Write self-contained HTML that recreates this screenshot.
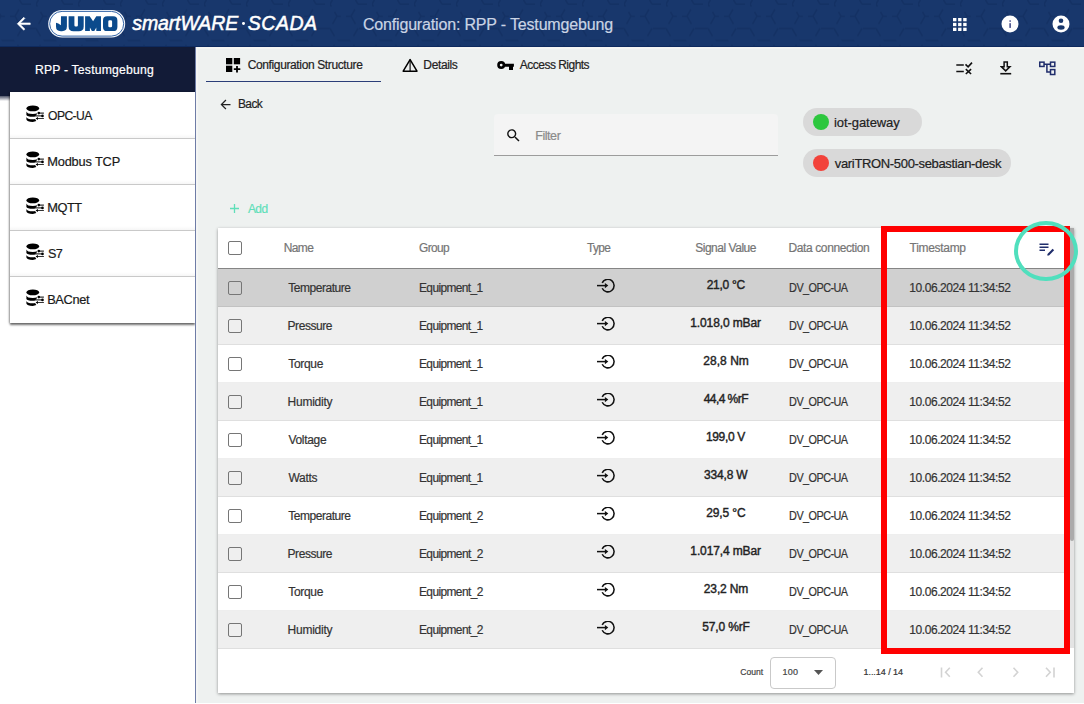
<!DOCTYPE html>
<html><head><meta charset="utf-8">
<style>
*{box-sizing:border-box;margin:0;padding:0}
html,body{width:1084px;height:704px;overflow:hidden;background:#eef1f0;font-family:"Liberation Sans",sans-serif;position:relative}
.a{position:absolute;white-space:nowrap}
.t{position:absolute;white-space:nowrap;line-height:1;-webkit-text-stroke:0.2px currentColor}
#hdr{left:0;top:0;width:1084px;height:47px;background:#18376c;border-bottom:1px solid #0e2a5e;overflow:hidden;z-index:5}
#side{left:0;top:47px;width:196px;height:657px;background:#fff}
#sidehead{left:0;top:47px;width:195px;height:49px;background:#121b37}
.stxt{font-size:13px;color:#222;letter-spacing:-0.35px}
.th{font-size:12px;color:#757575;letter-spacing:-0.3px}
.td{font-size:12px;color:#333;letter-spacing:-0.45px}
.sv{font-size:12px;color:#222;font-weight:bold;letter-spacing:-0.5px}
.row{left:218px;width:852px;height:38px;border-bottom:1px solid rgba(0,0,0,0.065)}
.cb{position:absolute;left:228px;width:14px;height:14px;border:1.7px solid #767676;border-radius:2px}

</style></head><body>
<div id="hdr" class="a">
<svg class="a" style="left:0;top:0" width="1084" height="47" viewBox="0 0 1084 47">
<defs><pattern id="hx" width="42" height="48.5" patternUnits="userSpaceOnUse" x="-6" y="-8">
<path d="M0 12.1 L7 0 H21 L28 12.1 L21 24.2 H7 Z M28 12.1 H42 M21 24.2 L28 36.4 H42 M7 24.2 L0 36.4 M28 36.4 L21 48.5 H7 L0 36.4" fill="none" stroke="#0f2a5a" stroke-width="1.6" stroke-dasharray="9 6 13 5"/>
</pattern></defs>
<rect width="1084" height="47" fill="url(#hx)" opacity="0.45"/></svg>
<svg class="a" style="left:13.5px;top:14px" width="19.5" height="19.5" viewBox="0 0 24 24"><path fill="#fff" stroke="#fff" stroke-width="0.7" d="M20 11H7.83l5.59-5.59L12 4l-8 8 8 8 1.41-1.41L7.83 13H20v-2z"/></svg>
<svg class="a" style="left:0;top:0" width="130" height="47" viewBox="0 0 130 47">
<rect x="48.2" y="9.9" width="77" height="27.7" rx="13.85" fill="#f4f7fb"/>
<rect x="49.7" y="11.4" width="74" height="24.7" rx="12.35" fill="#fff" stroke="#3566a8" stroke-width="1"/>
<g fill="#0b4a8c">
<path d="M61 16.2 H66.9 V26.6 Q66.9 31.2 62 31.2 H60.8 Q56 31.2 56 26.6 V22.8 L58.3 23.4 L60.9 25.3 Z"/>
<path d="M68.6 16.2 H74.4 V25.2 Q74.4 26.4 75.6 26.4 H76.7 Q77.9 26.4 77.9 25.2 V16.2 H83.7 V26.4 Q83.7 31.2 78.8 31.2 H73.5 Q68.6 31.2 68.6 26.4 Z"/>
<path d="M85.1 16.2 H89.7 L93.1 21.3 L96.3 16.2 H101 V31.1 H96.3 V27.4 L94.3 31.1 H91.9 L89.9 27.4 V31.1 H85.1 Z"/>
<path fill-rule="evenodd" d="M107.2 16.2 H113.2 Q117.4 16.2 117.4 20.4 V26.9 Q117.4 31.1 113.2 31.1 H107.2 Q103 31.1 103 26.9 V20.4 Q103 16.2 107.2 16.2 Z M109.6 20.3 Q108.3 20.3 108.3 21.6 V26 Q108.3 27.3 109.6 27.3 H110.8 Q112.1 27.3 112.1 26 V21.6 Q112.1 20.3 110.8 20.3 Z"/>
</g></svg>
<div class="t" style="left:132.30px;top:14.39px;font-size:19.5px;color:#fff;letter-spacing:-0.132px;font-style:italic;-webkit-text-stroke:0.5px #fff;">smartWARE</div>
<div class="t" style="left:247.81px;top:14.39px;font-size:19.5px;color:#fff;letter-spacing:0.496px;font-style:italic;-webkit-text-stroke:0.5px #fff;">SCADA</div>
<div class="a" style="left:242.2px;top:21.9px;width:2.8px;height:2.8px;border-radius:50%;background:#fff"></div>
<div class="t" style="left:362.90px;top:16.96px;font-size:16px;color:#cad4e4;letter-spacing:-0.168px;">Configuration: RPP - Testumgebung</div>
<svg class="a" style="left:953px;top:17.6px" width="14" height="13" viewBox="0 0 14 13" fill="#fff"><rect x="0" y="0" width="3.4" height="3.3"/><rect x="0" y="4.85" width="3.4" height="3.3"/><rect x="0" y="9.7" width="3.4" height="3.3"/><rect x="5.1" y="0" width="3.4" height="3.3"/><rect x="5.1" y="4.85" width="3.4" height="3.3"/><rect x="5.1" y="9.7" width="3.4" height="3.3"/><rect x="10.2" y="0" width="3.4" height="3.3"/><rect x="10.2" y="4.85" width="3.4" height="3.3"/><rect x="10.2" y="9.7" width="3.4" height="3.3"/></svg>
<svg class="a" style="left:1001px;top:15px" width="18" height="18" viewBox="0 0 18 18"><circle cx="9" cy="9" r="8.5" fill="#fff"/><rect x="8.45" y="8.2" width="1.3" height="4.7" fill="#1d2670"/><circle cx="9.1" cy="6.1" r="0.8" fill="#1d2670"/></svg>
<svg class="a" style="left:1052px;top:15px" width="18" height="18" viewBox="0 0 18 18"><circle cx="9" cy="9" r="8.5" fill="#fff"/><circle cx="9" cy="5.8" r="2.3" fill="#18376c"/><ellipse cx="9" cy="12.5" rx="3.6" ry="2.2" fill="#18376c"/></svg>
</div>
<div class="a" style="left:196px;top:47px;width:888px;height:2px;background:#f5f5f3"></div>
<div id="side" class="a"></div>
<div id="sidehead" class="a"></div>
<div class="a" style="left:0;top:96px;width:195px;height:5px;background:linear-gradient(rgba(18,27,55,0.75),rgba(18,27,55,0))"></div>
<div class="t" style="left:34.92px;top:63.67px;font-size:12.2px;color:#fff;letter-spacing:0.202px;">RPP - Testumgebung</div>
<div class="a" style="left:10px;top:92px;width:185px;height:231px;background:#fff;box-shadow:0 1.5px 2px rgba(0,0,0,0.55),-1px 0 2px rgba(0,0,0,0.25)"></div>
<svg class="a" style="left:26px;top:105.2px" width="19" height="18" viewBox="0 0 19 18">
<ellipse cx="6.8" cy="3.4" rx="6.4" ry="2.9" fill="#000"/>
<path d="M0.4 6.6 Q1 9.1 6.8 9.1 Q9.4 9.1 11.3 8.3 L9.7 11.2 Q8.3 11.7 6.8 11.7 Q1.1 11.7 0.4 9.9 Z" fill="#000"/>
<path d="M0.4 11.9 Q1 14.2 6.8 14.2 Q8.1 14.2 9.1 14 L10.3 16.1 Q8.7 16.9 6.8 16.9 Q1 16.9 0.4 14.6 Z" fill="#000"/>
<path d="M12 8.1 H17.9 M9.4 10.9 H16.5 M10.6 13.5 H17.9" stroke="#333" stroke-width="1.1"/>
<circle cx="12.8" cy="8.1" r="1.3" fill="#000"/><circle cx="16.5" cy="10.9" r="1.3" fill="#000"/><path d="M9.6 13.5 L12 12 V15Z" fill="#000"/>
</svg>
<div class="t" style="left:47.62px;top:109.86px;font-size:12.8px;color:#1a1a1a;letter-spacing:-0.600px;transform:scaleX(0.9469);transform-origin:0.58px 0;">OPC-UA</div>
<div class="a" style="left:10px;top:134px;width:185px;height:4px;background:linear-gradient(to bottom,rgba(0,0,0,0),rgba(0,0,0,0.035))"></div>
<div class="a" style="left:10px;top:138px;width:185px;height:1px;background:#c9c9c9"></div>
<svg class="a" style="left:26px;top:151.2px" width="19" height="18" viewBox="0 0 19 18">
<ellipse cx="6.8" cy="3.4" rx="6.4" ry="2.9" fill="#000"/>
<path d="M0.4 6.6 Q1 9.1 6.8 9.1 Q9.4 9.1 11.3 8.3 L9.7 11.2 Q8.3 11.7 6.8 11.7 Q1.1 11.7 0.4 9.9 Z" fill="#000"/>
<path d="M0.4 11.9 Q1 14.2 6.8 14.2 Q8.1 14.2 9.1 14 L10.3 16.1 Q8.7 16.9 6.8 16.9 Q1 16.9 0.4 14.6 Z" fill="#000"/>
<path d="M12 8.1 H17.9 M9.4 10.9 H16.5 M10.6 13.5 H17.9" stroke="#333" stroke-width="1.1"/>
<circle cx="12.8" cy="8.1" r="1.3" fill="#000"/><circle cx="16.5" cy="10.9" r="1.3" fill="#000"/><path d="M9.6 13.5 L12 12 V15Z" fill="#000"/>
</svg>
<div class="t" style="left:47.18px;top:155.86px;font-size:12.8px;color:#1a1a1a;letter-spacing:-0.152px;">Modbus TCP</div>
<div class="a" style="left:10px;top:180px;width:185px;height:4px;background:linear-gradient(to bottom,rgba(0,0,0,0),rgba(0,0,0,0.035))"></div>
<div class="a" style="left:10px;top:184px;width:185px;height:1px;background:#c9c9c9"></div>
<svg class="a" style="left:26px;top:197.2px" width="19" height="18" viewBox="0 0 19 18">
<ellipse cx="6.8" cy="3.4" rx="6.4" ry="2.9" fill="#000"/>
<path d="M0.4 6.6 Q1 9.1 6.8 9.1 Q9.4 9.1 11.3 8.3 L9.7 11.2 Q8.3 11.7 6.8 11.7 Q1.1 11.7 0.4 9.9 Z" fill="#000"/>
<path d="M0.4 11.9 Q1 14.2 6.8 14.2 Q8.1 14.2 9.1 14 L10.3 16.1 Q8.7 16.9 6.8 16.9 Q1 16.9 0.4 14.6 Z" fill="#000"/>
<path d="M12 8.1 H17.9 M9.4 10.9 H16.5 M10.6 13.5 H17.9" stroke="#333" stroke-width="1.1"/>
<circle cx="12.8" cy="8.1" r="1.3" fill="#000"/><circle cx="16.5" cy="10.9" r="1.3" fill="#000"/><path d="M9.6 13.5 L12 12 V15Z" fill="#000"/>
</svg>
<div class="t" style="left:47.18px;top:201.86px;font-size:12.8px;color:#1a1a1a;letter-spacing:-0.415px;">MQTT</div>
<div class="a" style="left:10px;top:226px;width:185px;height:4px;background:linear-gradient(to bottom,rgba(0,0,0,0),rgba(0,0,0,0.035))"></div>
<div class="a" style="left:10px;top:230px;width:185px;height:1px;background:#c9c9c9"></div>
<svg class="a" style="left:26px;top:243.2px" width="19" height="18" viewBox="0 0 19 18">
<ellipse cx="6.8" cy="3.4" rx="6.4" ry="2.9" fill="#000"/>
<path d="M0.4 6.6 Q1 9.1 6.8 9.1 Q9.4 9.1 11.3 8.3 L9.7 11.2 Q8.3 11.7 6.8 11.7 Q1.1 11.7 0.4 9.9 Z" fill="#000"/>
<path d="M0.4 11.9 Q1 14.2 6.8 14.2 Q8.1 14.2 9.1 14 L10.3 16.1 Q8.7 16.9 6.8 16.9 Q1 16.9 0.4 14.6 Z" fill="#000"/>
<path d="M12 8.1 H17.9 M9.4 10.9 H16.5 M10.6 13.5 H17.9" stroke="#333" stroke-width="1.1"/>
<circle cx="12.8" cy="8.1" r="1.3" fill="#000"/><circle cx="16.5" cy="10.9" r="1.3" fill="#000"/><path d="M9.6 13.5 L12 12 V15Z" fill="#000"/>
</svg>
<div class="t" style="left:47.62px;top:247.86px;font-size:12.8px;color:#1a1a1a;letter-spacing:-0.600px;transform:scaleX(0.9855);transform-origin:0.58px 0;">S7</div>
<div class="a" style="left:10px;top:272px;width:185px;height:4px;background:linear-gradient(to bottom,rgba(0,0,0,0),rgba(0,0,0,0.035))"></div>
<div class="a" style="left:10px;top:276px;width:185px;height:1px;background:#c9c9c9"></div>
<svg class="a" style="left:26px;top:289.2px" width="19" height="18" viewBox="0 0 19 18">
<ellipse cx="6.8" cy="3.4" rx="6.4" ry="2.9" fill="#000"/>
<path d="M0.4 6.6 Q1 9.1 6.8 9.1 Q9.4 9.1 11.3 8.3 L9.7 11.2 Q8.3 11.7 6.8 11.7 Q1.1 11.7 0.4 9.9 Z" fill="#000"/>
<path d="M0.4 11.9 Q1 14.2 6.8 14.2 Q8.1 14.2 9.1 14 L10.3 16.1 Q8.7 16.9 6.8 16.9 Q1 16.9 0.4 14.6 Z" fill="#000"/>
<path d="M12 8.1 H17.9 M9.4 10.9 H16.5 M10.6 13.5 H17.9" stroke="#333" stroke-width="1.1"/>
<circle cx="12.8" cy="8.1" r="1.3" fill="#000"/><circle cx="16.5" cy="10.9" r="1.3" fill="#000"/><path d="M9.6 13.5 L12 12 V15Z" fill="#000"/>
</svg>
<div class="t" style="left:47.18px;top:293.86px;font-size:12.8px;color:#1a1a1a;letter-spacing:-0.342px;">BACnet</div>
<div class="a" style="left:195px;top:47px;width:1px;height:656px;background:#6e7ca6"></div>
<div class="a" style="left:196px;top:49px;width:2px;height:654px;background:#f4f5f4"></div>
<svg class="a" style="left:226px;top:58px" width="16" height="15" viewBox="0 0 16 15">
<rect x="0" y="0" width="6.3" height="6.3" fill="#000"/><rect x="7.8" y="0" width="6.3" height="6.3" fill="#000"/><rect x="0" y="7.7" width="6.3" height="6.3" fill="#000"/>
<path d="M11 8 V14.5 M7.8 11.2 H14.3" stroke="#000" stroke-width="1.8"/></svg>
<div class="t" style="left:247.70px;top:58.84px;font-size:12px;color:#222;letter-spacing:-0.372px;">Configuration Structure</div>
<div class="a" style="left:205.5px;top:80.8px;width:175.5px;height:1.7px;background:#2b3e78"></div>
<svg class="a" style="left:401.5px;top:57.5px" width="17" height="15" viewBox="0 0 17 15"><path d="M8.1 1.6 L15 13.2 H1.2 Z" fill="none" stroke="#000" stroke-width="1.5" stroke-linejoin="round"/><path d="M8.1 1.5 V13" stroke="#000" stroke-width="1.1"/></svg>
<div class="t" style="left:423.34px;top:58.84px;font-size:12px;color:#222;letter-spacing:-0.363px;">Details</div>
<svg class="a" style="left:496px;top:60px" width="19" height="11" viewBox="0 0 19 11"><circle cx="5.2" cy="5.1" r="2.7" fill="none" stroke="#000" stroke-width="2.6"/><path d="M7.8 3.7 H17.9 V6.8 H17 V9.9 H13 V6.8 H7.8Z" fill="#000"/></svg>
<div class="t" style="left:519.80px;top:58.84px;font-size:12px;color:#222;letter-spacing:-0.517px;">Access Rights</div>
<svg class="a" style="left:956px;top:62px" width="17" height="13" viewBox="0 0 17 13">
<path d="M0.3 3 H7.8 M0.3 9.5 H7.8" stroke="#111" stroke-width="1.5"/>
<path d="M9.5 2.4 L12.1 4.8 L16 0.6" fill="none" stroke="#111" stroke-width="1.6"/>
<path d="M9.8 7.2 L15.1 12 M15.1 7.2 L9.8 12" stroke="#111" stroke-width="1.6"/></svg>
<svg class="a" style="left:1000px;top:61px" width="12" height="14" viewBox="0 0 12 14">
<path d="M4.1 0.9 H7.3 V5.8 H9.9 L5.7 9.9 L1.5 5.8 H4.1Z" fill="none" stroke="#111" stroke-width="1.5" stroke-linejoin="miter"/>
<path d="M0.3 12.7 H11.2" stroke="#111" stroke-width="1.6"/></svg>
<svg class="a" style="left:1039px;top:61px" width="17" height="15" viewBox="0 0 17 15">
<g fill="none" stroke="#1f2d6b" stroke-width="1.5">
<rect x="0.75" y="1.15" width="4.3" height="4.3"/><rect x="11.5" y="1.15" width="4.3" height="4.3"/><rect x="11.5" y="8.6" width="4.3" height="4.9"/>
<path d="M5 3.2 H11.5 M7.9 3.2 V11 H11.5"/></g></svg>
<svg class="a" style="left:217.5px;top:96.7px" width="15" height="15" viewBox="0 0 24 24"><path fill="#222" d="M20 11H7.83l5.59-5.59L12 4l-8 8 8 8 1.41-1.41L7.83 13H20v-2z"/></svg>
<div class="t" style="left:237.84px;top:97.84px;font-size:12px;color:#222;letter-spacing:-0.600px;transform:scaleX(0.9942);transform-origin:0.96px 0;">Back</div>
<div class="a" style="left:494px;top:114px;width:284px;height:42px;background:#f4f4f4;border-radius:4px 4px 0 0;border-bottom:1px solid #9c9c9c"></div>
<svg class="a" style="left:505px;top:127px" width="17" height="17" viewBox="0 0 24 24"><path fill="#111" d="M15.5 14h-.79l-.28-.27C15.41 12.59 16 11.11 16 9.5 16 5.91 13.09 3 9.5 3S3 5.91 3 9.5 5.91 16 9.5 16c1.61 0 3.09-.59 4.23-1.57l.27.28v.79l5 4.99L20.49 19l-4.99-5zm-6 0C7.01 14 5 11.99 5 9.5S7.01 5 9.5 5 14 7.01 14 9.5 11.99 14 9.5 14z"/></svg>
<div class="t" style="left:535.20px;top:129.62px;font-size:12.5px;color:#8a8a8a;letter-spacing:-0.433px;">Filter</div>
<div class="a" style="left:803px;top:108px;width:119px;height:28px;border-radius:14px;background:#d9d9d9"></div>
<div class="a" style="left:812.5px;top:113.5px;width:16px;height:16px;border-radius:50%;background:#2dc73e"></div>
<div class="t" style="left:834.05px;top:116.20px;font-size:13px;color:#222;letter-spacing:-0.075px;">iot-gateway</div>
<div class="a" style="left:803px;top:149px;width:208px;height:28px;border-radius:14px;background:#d9d9d9"></div>
<div class="a" style="left:812.5px;top:154.5px;width:16px;height:16px;border-radius:50%;background:#f2423a"></div>
<div class="t" style="left:834.83px;top:157.40px;font-size:13px;color:#222;letter-spacing:-0.342px;">variTRON-500-sebastian-desk</div>
<svg class="a" style="left:230.2px;top:204.1px" width="9" height="9" viewBox="0 0 9 9"><path d="M4.5 0 V9 M0 4.5 H9" stroke="#5fdfb9" stroke-width="1.3"/></svg>
<div class="t" style="left:248.00px;top:202.54px;font-size:12px;color:#5fdfb9;letter-spacing:-0.600px;transform:scaleX(0.9959);transform-origin:0.00px 0;">Add</div>
<div class="a" style="left:218px;top:228px;width:856px;height:465px;background:#fff;box-shadow:0 1px 3px rgba(0,0,0,0.4)"></div>
<div class="a" style="left:218px;top:268px;width:852px;height:1px;background:#858585"></div>
<div class="cb" style="top:241px"></div>
<div class="t" style="left:283.64px;top:242.34px;font-size:12px;color:#757575;letter-spacing:-0.580px;">Name</div>
<div class="t" style="left:419.20px;top:242.34px;font-size:12px;color:#757575;letter-spacing:-0.600px;transform:scaleX(0.9906);transform-origin:0.60px 0;">Group</div>
<div class="t" style="left:586.76px;top:242.34px;font-size:12px;color:#757575;letter-spacing:-0.600px;transform:scaleX(0.9889);transform-origin:0.24px 0;">Type</div>
<div class="t" style="left:695.16px;top:242.34px;font-size:12px;color:#757575;letter-spacing:-0.469px;">Signal Value</div>
<div class="t" style="left:788.54px;top:242.34px;font-size:12px;color:#757575;letter-spacing:-0.390px;">Data connection</div>
<div class="t" style="left:909.56px;top:242.34px;font-size:12px;color:#757575;letter-spacing:-0.305px;">Timestamp</div>
<svg class="a" style="left:1039px;top:241.5px" width="18" height="16" viewBox="0 0 18 16">
<path d="M0.5 2.2 H9.5 M0.5 5.2 H9.5 M0.5 8.2 H6" stroke="#1f2d6b" stroke-width="1.5"/>
<path d="M8.2 13.6 L8.5 11.9 L13.6 6.8 L15.1 8.3 L10 13.4Z" fill="#1f2d6b"/></svg>
<div class="a row" style="top:269px;background:#d0d0d0"></div>
<div class="cb" style="top:280.5px"></div>
<div class="t" style="left:288.26px;top:281.84px;font-size:12px;color:#333;letter-spacing:-0.466px;">Temperature</div>
<div class="t" style="left:419.34px;top:281.84px;font-size:12px;color:#333;letter-spacing:-0.600px;transform:scaleX(0.9924);transform-origin:0.96px 0;">Equipment_1</div>
<svg class="a" style="left:597px;top:279.2px" width="19" height="16" viewBox="0 0 19 16">
<path d="M5.2 3.95 A6.25 6.25 0 1 1 5.2 9.25" fill="none" stroke="#111" stroke-width="1.55"/>
<path d="M0 6.6 H8.5" stroke="#111" stroke-width="1.5"/><path d="M7.9 3.9 L11.3 6.6 L7.9 9.3Z" fill="#111"/></svg>
<div class="t" style="left:706.70px;top:279.24px;font-size:12px;color:#222;letter-spacing:-0.287px;-webkit-text-stroke:0.4px #222;">21,0 °C</div>
<div class="t" style="left:788.84px;top:281.64px;font-size:12px;color:#333;letter-spacing:-0.600px;transform:scaleX(0.9041);transform-origin:0.96px 0;">DV_OPC-UA</div>
<div class="t" style="left:909.30px;top:281.64px;font-size:12px;color:#333;letter-spacing:-0.428px;">10.06.2024 11:34:52</div>
<div class="a row" style="top:307px;background:#efefef"></div>
<div class="cb" style="top:318.5px"></div>
<div class="t" style="left:287.54px;top:319.84px;font-size:12px;color:#333;letter-spacing:-0.437px;">Pressure</div>
<div class="t" style="left:419.34px;top:319.84px;font-size:12px;color:#333;letter-spacing:-0.600px;transform:scaleX(0.9924);transform-origin:0.96px 0;">Equipment_1</div>
<svg class="a" style="left:597px;top:317.2px" width="19" height="16" viewBox="0 0 19 16">
<path d="M5.2 3.95 A6.25 6.25 0 1 1 5.2 9.25" fill="none" stroke="#111" stroke-width="1.55"/>
<path d="M0 6.6 H8.5" stroke="#111" stroke-width="1.5"/><path d="M7.9 3.9 L11.3 6.6 L7.9 9.3Z" fill="#111"/></svg>
<div class="t" style="left:690.30px;top:317.24px;font-size:12px;color:#222;letter-spacing:-0.120px;-webkit-text-stroke:0.4px #222;">1.018,0 mBar</div>
<div class="t" style="left:788.84px;top:319.64px;font-size:12px;color:#333;letter-spacing:-0.600px;transform:scaleX(0.9041);transform-origin:0.96px 0;">DV_OPC-UA</div>
<div class="t" style="left:909.30px;top:319.64px;font-size:12px;color:#333;letter-spacing:-0.428px;">10.06.2024 11:34:52</div>
<div class="a row" style="top:345px;background:#ffffff"></div>
<div class="cb" style="top:356.5px"></div>
<div class="t" style="left:288.26px;top:357.84px;font-size:12px;color:#333;letter-spacing:-0.328px;">Torque</div>
<div class="t" style="left:419.34px;top:357.84px;font-size:12px;color:#333;letter-spacing:-0.600px;transform:scaleX(0.9924);transform-origin:0.96px 0;">Equipment_1</div>
<svg class="a" style="left:597px;top:355.2px" width="19" height="16" viewBox="0 0 19 16">
<path d="M5.2 3.95 A6.25 6.25 0 1 1 5.2 9.25" fill="none" stroke="#111" stroke-width="1.55"/>
<path d="M0 6.6 H8.5" stroke="#111" stroke-width="1.5"/><path d="M7.9 3.9 L11.3 6.6 L7.9 9.3Z" fill="#111"/></svg>
<div class="t" style="left:703.35px;top:355.24px;font-size:12px;color:#222;letter-spacing:0.020px;-webkit-text-stroke:0.4px #222;">28,8 Nm</div>
<div class="t" style="left:788.84px;top:357.64px;font-size:12px;color:#333;letter-spacing:-0.600px;transform:scaleX(0.9041);transform-origin:0.96px 0;">DV_OPC-UA</div>
<div class="t" style="left:909.30px;top:357.64px;font-size:12px;color:#333;letter-spacing:-0.428px;">10.06.2024 11:34:52</div>
<div class="a row" style="top:383px;background:#efefef"></div>
<div class="cb" style="top:394.5px"></div>
<div class="t" style="left:287.54px;top:395.84px;font-size:12px;color:#333;letter-spacing:-0.246px;">Humidity</div>
<div class="t" style="left:419.34px;top:395.84px;font-size:12px;color:#333;letter-spacing:-0.600px;transform:scaleX(0.9924);transform-origin:0.96px 0;">Equipment_1</div>
<svg class="a" style="left:597px;top:393.2px" width="19" height="16" viewBox="0 0 19 16">
<path d="M5.2 3.95 A6.25 6.25 0 1 1 5.2 9.25" fill="none" stroke="#111" stroke-width="1.55"/>
<path d="M0 6.6 H8.5" stroke="#111" stroke-width="1.5"/><path d="M7.9 3.9 L11.3 6.6 L7.9 9.3Z" fill="#111"/></svg>
<div class="t" style="left:703.76px;top:393.24px;font-size:12px;color:#222;letter-spacing:-0.563px;-webkit-text-stroke:0.4px #222;">44,4 %rF</div>
<div class="t" style="left:788.84px;top:395.64px;font-size:12px;color:#333;letter-spacing:-0.600px;transform:scaleX(0.9041);transform-origin:0.96px 0;">DV_OPC-UA</div>
<div class="t" style="left:909.30px;top:395.64px;font-size:12px;color:#333;letter-spacing:-0.428px;">10.06.2024 11:34:52</div>
<div class="a row" style="top:421px;background:#ffffff"></div>
<div class="cb" style="top:432.5px"></div>
<div class="t" style="left:288.44px;top:433.84px;font-size:12px;color:#333;letter-spacing:-0.313px;">Voltage</div>
<div class="t" style="left:419.34px;top:433.84px;font-size:12px;color:#333;letter-spacing:-0.600px;transform:scaleX(0.9924);transform-origin:0.96px 0;">Equipment_1</div>
<svg class="a" style="left:597px;top:431.2px" width="19" height="16" viewBox="0 0 19 16">
<path d="M5.2 3.95 A6.25 6.25 0 1 1 5.2 9.25" fill="none" stroke="#111" stroke-width="1.55"/>
<path d="M0 6.6 H8.5" stroke="#111" stroke-width="1.5"/><path d="M7.9 3.9 L11.3 6.6 L7.9 9.3Z" fill="#111"/></svg>
<div class="t" style="left:705.95px;top:431.24px;font-size:12px;color:#222;letter-spacing:-0.347px;-webkit-text-stroke:0.4px #222;">199,0 V</div>
<div class="t" style="left:788.84px;top:433.64px;font-size:12px;color:#333;letter-spacing:-0.600px;transform:scaleX(0.9041);transform-origin:0.96px 0;">DV_OPC-UA</div>
<div class="t" style="left:909.30px;top:433.64px;font-size:12px;color:#333;letter-spacing:-0.428px;">10.06.2024 11:34:52</div>
<div class="a row" style="top:459px;background:#efefef"></div>
<div class="cb" style="top:470.5px"></div>
<div class="t" style="left:288.44px;top:471.84px;font-size:12px;color:#333;letter-spacing:-0.265px;">Watts</div>
<div class="t" style="left:419.34px;top:471.84px;font-size:12px;color:#333;letter-spacing:-0.600px;transform:scaleX(0.9924);transform-origin:0.96px 0;">Equipment_1</div>
<svg class="a" style="left:597px;top:469.2px" width="19" height="16" viewBox="0 0 19 16">
<path d="M5.2 3.95 A6.25 6.25 0 1 1 5.2 9.25" fill="none" stroke="#111" stroke-width="1.55"/>
<path d="M0 6.6 H8.5" stroke="#111" stroke-width="1.5"/><path d="M7.9 3.9 L11.3 6.6 L7.9 9.3Z" fill="#111"/></svg>
<div class="t" style="left:703.88px;top:469.24px;font-size:12px;color:#222;letter-spacing:-0.147px;-webkit-text-stroke:0.4px #222;">334,8 W</div>
<div class="t" style="left:788.84px;top:471.64px;font-size:12px;color:#333;letter-spacing:-0.600px;transform:scaleX(0.9041);transform-origin:0.96px 0;">DV_OPC-UA</div>
<div class="t" style="left:909.30px;top:471.64px;font-size:12px;color:#333;letter-spacing:-0.428px;">10.06.2024 11:34:52</div>
<div class="a row" style="top:497px;background:#ffffff"></div>
<div class="cb" style="top:508.5px"></div>
<div class="t" style="left:288.26px;top:509.84px;font-size:12px;color:#333;letter-spacing:-0.466px;">Temperature</div>
<div class="t" style="left:419.34px;top:509.84px;font-size:12px;color:#333;letter-spacing:-0.600px;transform:scaleX(0.9933);transform-origin:0.96px 0;">Equipment_2</div>
<svg class="a" style="left:597px;top:507.2px" width="19" height="16" viewBox="0 0 19 16">
<path d="M5.2 3.95 A6.25 6.25 0 1 1 5.2 9.25" fill="none" stroke="#111" stroke-width="1.55"/>
<path d="M0 6.6 H8.5" stroke="#111" stroke-width="1.5"/><path d="M7.9 3.9 L11.3 6.6 L7.9 9.3Z" fill="#111"/></svg>
<div class="t" style="left:706.23px;top:507.24px;font-size:12px;color:#222;letter-spacing:-0.130px;-webkit-text-stroke:0.4px #222;">29,5 °C</div>
<div class="t" style="left:788.84px;top:509.64px;font-size:12px;color:#333;letter-spacing:-0.600px;transform:scaleX(0.9041);transform-origin:0.96px 0;">DV_OPC-UA</div>
<div class="t" style="left:909.30px;top:509.64px;font-size:12px;color:#333;letter-spacing:-0.428px;">10.06.2024 11:34:52</div>
<div class="a row" style="top:535px;background:#efefef"></div>
<div class="cb" style="top:546.5px"></div>
<div class="t" style="left:287.54px;top:547.84px;font-size:12px;color:#333;letter-spacing:-0.437px;">Pressure</div>
<div class="t" style="left:419.34px;top:547.84px;font-size:12px;color:#333;letter-spacing:-0.600px;transform:scaleX(0.9933);transform-origin:0.96px 0;">Equipment_2</div>
<svg class="a" style="left:597px;top:545.2px" width="19" height="16" viewBox="0 0 19 16">
<path d="M5.2 3.95 A6.25 6.25 0 1 1 5.2 9.25" fill="none" stroke="#111" stroke-width="1.55"/>
<path d="M0 6.6 H8.5" stroke="#111" stroke-width="1.5"/><path d="M7.9 3.9 L11.3 6.6 L7.9 9.3Z" fill="#111"/></svg>
<div class="t" style="left:690.35px;top:545.24px;font-size:12px;color:#222;letter-spacing:-0.129px;-webkit-text-stroke:0.4px #222;">1.017,4 mBar</div>
<div class="t" style="left:788.84px;top:547.64px;font-size:12px;color:#333;letter-spacing:-0.600px;transform:scaleX(0.9041);transform-origin:0.96px 0;">DV_OPC-UA</div>
<div class="t" style="left:909.30px;top:547.64px;font-size:12px;color:#333;letter-spacing:-0.428px;">10.06.2024 11:34:52</div>
<div class="a row" style="top:573px;background:#ffffff"></div>
<div class="cb" style="top:584.5px"></div>
<div class="t" style="left:288.26px;top:585.84px;font-size:12px;color:#333;letter-spacing:-0.328px;">Torque</div>
<div class="t" style="left:419.34px;top:585.84px;font-size:12px;color:#333;letter-spacing:-0.600px;transform:scaleX(0.9933);transform-origin:0.96px 0;">Equipment_2</div>
<svg class="a" style="left:597px;top:583.2px" width="19" height="16" viewBox="0 0 19 16">
<path d="M5.2 3.95 A6.25 6.25 0 1 1 5.2 9.25" fill="none" stroke="#111" stroke-width="1.55"/>
<path d="M0 6.6 H8.5" stroke="#111" stroke-width="1.5"/><path d="M7.9 3.9 L11.3 6.6 L7.9 9.3Z" fill="#111"/></svg>
<div class="t" style="left:703.85px;top:583.24px;font-size:12px;color:#222;letter-spacing:-0.147px;-webkit-text-stroke:0.4px #222;">23,2 Nm</div>
<div class="t" style="left:788.84px;top:585.64px;font-size:12px;color:#333;letter-spacing:-0.600px;transform:scaleX(0.9041);transform-origin:0.96px 0;">DV_OPC-UA</div>
<div class="t" style="left:909.30px;top:585.64px;font-size:12px;color:#333;letter-spacing:-0.428px;">10.06.2024 11:34:52</div>
<div class="a row" style="top:611px;background:#efefef"></div>
<div class="cb" style="top:622.5px"></div>
<div class="t" style="left:287.54px;top:623.84px;font-size:12px;color:#333;letter-spacing:-0.246px;">Humidity</div>
<div class="t" style="left:419.34px;top:623.84px;font-size:12px;color:#333;letter-spacing:-0.600px;transform:scaleX(0.9933);transform-origin:0.96px 0;">Equipment_2</div>
<svg class="a" style="left:597px;top:621.2px" width="19" height="16" viewBox="0 0 19 16">
<path d="M5.2 3.95 A6.25 6.25 0 1 1 5.2 9.25" fill="none" stroke="#111" stroke-width="1.55"/>
<path d="M0 6.6 H8.5" stroke="#111" stroke-width="1.5"/><path d="M7.9 3.9 L11.3 6.6 L7.9 9.3Z" fill="#111"/></svg>
<div class="t" style="left:702.15px;top:621.24px;font-size:12px;color:#222;letter-spacing:-0.136px;-webkit-text-stroke:0.4px #222;">57,0 %rF</div>
<div class="t" style="left:788.84px;top:623.64px;font-size:12px;color:#333;letter-spacing:-0.600px;transform:scaleX(0.9041);transform-origin:0.96px 0;">DV_OPC-UA</div>
<div class="t" style="left:909.30px;top:623.64px;font-size:12px;color:#333;letter-spacing:-0.428px;">10.06.2024 11:34:52</div>
<div class="a" style="left:1070px;top:228px;width:4px;height:420px;background:#e4e4e4"></div>
<div class="a" style="left:1070px;top:228px;width:4px;height:313px;background:#ababab;border-radius:0 0 2px 2px"></div>
<div class="t" style="left:740.37px;top:668.02px;font-size:8.6px;color:#444;letter-spacing:-0.011px;">Count</div>
<div class="a" style="left:770px;top:657px;width:66px;height:32px;border:1px solid #c9c9c9;border-radius:4px;background:#fff"></div>
<div class="t" style="left:782.53px;top:668.38px;font-size:9px;color:#444;letter-spacing:0.202px;">100</div>
<svg class="a" style="left:814px;top:670px" width="9" height="5" viewBox="0 0 9 5"><path d="M0 0 H9 L4.5 5Z" fill="#555"/></svg>
<div class="t" style="left:863.53px;top:667.88px;font-size:9px;color:#333;letter-spacing:-0.051px;">1...14 / 14</div>
<svg class="a" style="left:940px;top:667px" width="118" height="11" viewBox="0 0 118 11">
<g fill="none" stroke="#d3d3d3" stroke-width="1.6">
<path d="M1.5 0.5 V10.5 M9.8 0.8 L5.6 5.3 L9.8 9.8"/>
<path d="M42.5 0.8 L38.3 5.3 L42.5 9.8"/>
<path d="M73.5 0.8 L77.7 5.3 L73.5 9.8"/>
<path d="M106 0.8 L110.2 5.3 L106 9.8 M114 0.5 V10.5"/></g></svg>
<div class="a" style="left:0;top:702.6px;width:1084px;height:1.4px;background:#fff"></div>
<div class="a" style="left:881px;top:226px;width:189px;height:428px;border:6px solid #ff0000"></div>
<div class="a" style="left:1014px;top:220.8px;width:63.7px;height:60px;border:4px solid #50dfbd;border-radius:50%"></div>
</body></html>
